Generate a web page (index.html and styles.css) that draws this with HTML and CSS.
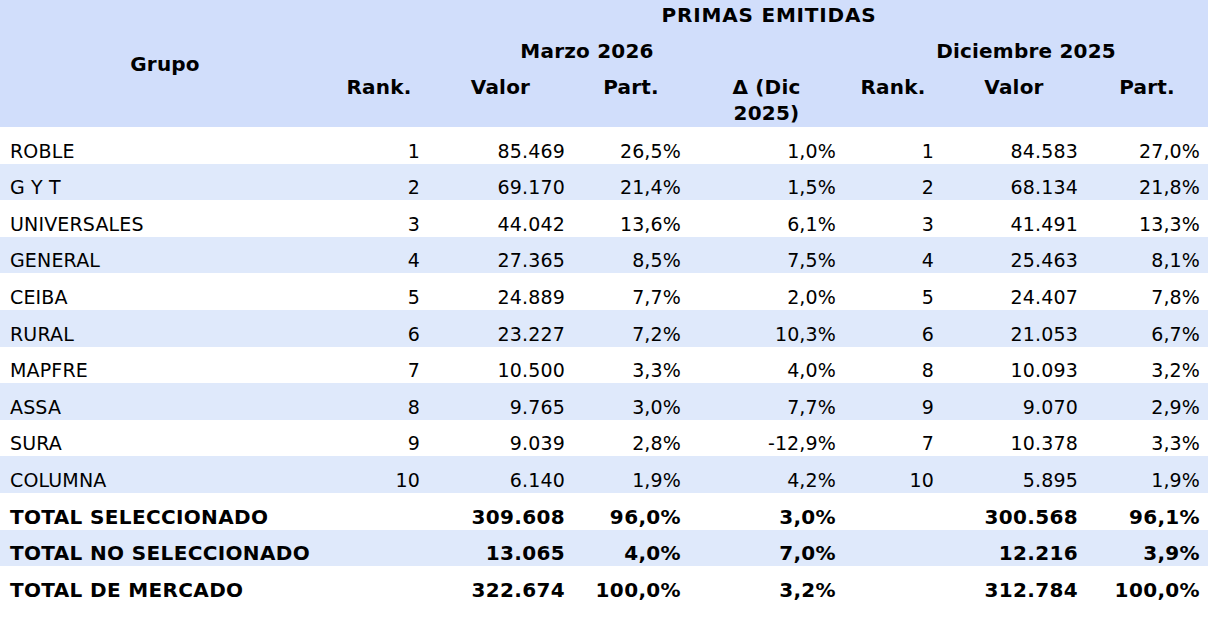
FILE: index.html
```html
<!DOCTYPE html>
<html lang="es">
<head>
<meta charset="utf-8">
<title>Primas emitidas</title>
<link rel="stylesheet" href="styles.css">
</head>
<body>
<table class="tbl">
  <colgroup>
    <col class="c-grupo"><col class="c-rank"><col class="c-valor"><col class="c-part">
    <col class="c-delta"><col class="c-rank2"><col class="c-valor2"><col class="c-part2">
  </colgroup>
  <thead>
    <tr class="h1">
      <th rowspan="3" class="grupo">Grupo</th>
      <th colspan="7" class="primas">PRIMAS EMITIDAS</th>
    </tr>
    <tr class="h2">
      <th colspan="4">Marzo 2026</th>
      <th colspan="3">Diciembre 2025</th>
    </tr>
    <tr class="h3">
      <th>Rank.</th><th>Valor</th><th>Part.</th><th>Δ (Dic<br>2025)</th>
      <th>Rank.</th><th>Valor</th><th>Part.</th>
    </tr>
  </thead>
  <tbody>
    <tr><td>ROBLE</td><td>1</td><td>85.469</td><td>26,5%</td><td>1,0%</td><td>1</td><td>84.583</td><td>27,0%</td></tr>
    <tr><td>G Y T</td><td>2</td><td>69.170</td><td>21,4%</td><td>1,5%</td><td>2</td><td>68.134</td><td>21,8%</td></tr>
    <tr><td>UNIVERSALES</td><td>3</td><td>44.042</td><td>13,6%</td><td>6,1%</td><td>3</td><td>41.491</td><td>13,3%</td></tr>
    <tr><td>GENERAL</td><td>4</td><td>27.365</td><td>8,5%</td><td>7,5%</td><td>4</td><td>25.463</td><td>8,1%</td></tr>
    <tr><td>CEIBA</td><td>5</td><td>24.889</td><td>7,7%</td><td>2,0%</td><td>5</td><td>24.407</td><td>7,8%</td></tr>
    <tr><td>RURAL</td><td>6</td><td>23.227</td><td>7,2%</td><td>10,3%</td><td>6</td><td>21.053</td><td>6,7%</td></tr>
    <tr><td>MAPFRE</td><td>7</td><td>10.500</td><td>3,3%</td><td>4,0%</td><td>8</td><td>10.093</td><td>3,2%</td></tr>
    <tr><td>ASSA</td><td>8</td><td>9.765</td><td>3,0%</td><td>7,7%</td><td>9</td><td>9.070</td><td>2,9%</td></tr>
    <tr><td>SURA</td><td>9</td><td>9.039</td><td>2,8%</td><td>-12,9%</td><td>7</td><td>10.378</td><td>3,3%</td></tr>
    <tr><td>COLUMNA</td><td>10</td><td>6.140</td><td>1,9%</td><td>4,2%</td><td>10</td><td>5.895</td><td>1,9%</td></tr>
    <tr class="total"><td>TOTAL SELECCIONADO</td><td></td><td>309.608</td><td>96,0%</td><td>3,0%</td><td></td><td>300.568</td><td>96,1%</td></tr>
    <tr class="total"><td>TOTAL NO SELECCIONADO</td><td></td><td>13.065</td><td>4,0%</td><td>7,0%</td><td></td><td>12.216</td><td>3,9%</td></tr>
    <tr class="total"><td>TOTAL DE MERCADO</td><td></td><td>322.674</td><td>100,0%</td><td>3,2%</td><td></td><td>312.784</td><td>100,0%</td></tr>
  </tbody>
</table>
</body>
</html>
```
FILE: styles.css
```css
html, body {
  margin: 0;
  padding: 0;
  background: #ffffff;
}
body {
  font-family: "DejaVu Sans", Verdana, sans-serif;
  font-size: 19px;
  color: #000000;
}
.tbl {
  width: 1208px;
  border-collapse: collapse;
  border-spacing: 0;
  table-layout: fixed;
}
.c-grupo { width: 330px; }
.c-rank { width: 98px; }
.c-valor { width: 145px; }
.c-part { width: 116px; }
.c-delta { width: 155px; }
.c-rank2 { width: 98px; }
.c-valor2 { width: 144px; }
.c-part2 { width: 122px; }

.tbl th {
  background: #d1defb;
  font-weight: bold;
  font-size: 20px;
  letter-spacing: 0.2px;
  text-align: center;
  line-height: 22px;
  padding: 0;
  vertical-align: middle;
  box-sizing: border-box;
}
.h1 { height: 32px; }
.h1 th { padding-bottom: 3px; }
.tbl th.primas { letter-spacing: 0.8px; }
.h2 { height: 38px; }
.h3 { height: 57px; }
.h3 th {
  vertical-align: top;
  line-height: 26px;
  padding-top: 4px;
}
.tbl th.grupo {
  vertical-align: middle;
  line-height: 22px;
  padding: 0;
}
.tbl td {
  height: 36.6px;
  padding: 0 8px 2px 8px;
  line-height: 22px;
  vertical-align: bottom;
  text-align: right;
  box-sizing: border-box;
  letter-spacing: 0.15px;
}
.tbl td:first-child {
  text-align: left;
  padding-left: 10px;
}
.tbl tbody tr:nth-child(even) td {
  background: #dfe9fb;
}
.total td {
  font-weight: bold;
  font-size: 20px;
  letter-spacing: 0.35px;
}
```
